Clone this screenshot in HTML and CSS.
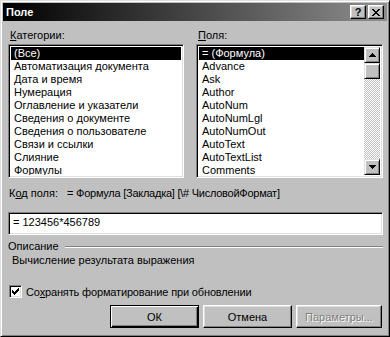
FILE: index.html
```html
<!DOCTYPE html>
<html>
  <head>
    <title>Поле</title>
    <link rel="stylesheet" href="styles.css">
  </head>
  <body>
    <div class="window">
      <div class="titlebar">
        <span class="title">Поле</span>
        <div class="title-buttons">
          <span class="tbtn help">?</span>
          <span class="tbtn close">
            <svg width="8" height="7" viewBox="0 0 8 7"><path d="M0 0h2v1h1v1h2V1h1V0h2v1H7v1H6v1H5v1h1v1h1v1h1v1H6V6H5V5H3v1H2v1H0V6h1V5h1V4h1V3H2V2H1V1H0z" fill="#000"/></svg>
          </span>
        </div>
      </div>

      <div class="content">
        <div class="lists">
          <div class="col">
            <div class="label"><u>К</u>атегории:</div>
            <div class="listbox">
              <div class="items">
                <div class="item selected">(Все)</div>
                <div class="item">Автоматизация документа</div>
                <div class="item">Дата и время</div>
                <div class="item">Нумерация</div>
                <div class="item">Оглавление и указатели</div>
                <div class="item">Сведения о документе</div>
                <div class="item">Сведения о пользователе</div>
                <div class="item">Связи и ссылки</div>
                <div class="item">Слияние</div>
                <div class="item">Формулы</div>
              </div>
            </div>
          </div>
          <div class="col">
            <div class="label"><u>П</u>оля:</div>
            <div class="listbox">
              <div class="items">
                <div class="item selected">= (Формула)</div>
                <div class="item">Advance</div>
                <div class="item">Ask</div>
                <div class="item">Author</div>
                <div class="item">AutoNum</div>
                <div class="item">AutoNumLgl</div>
                <div class="item">AutoNumOut</div>
                <div class="item">AutoText</div>
                <div class="item">AutoTextList</div>
                <div class="item">Comments</div>
              </div>
              <div class="scrollbar">
                <div class="sbtn">
                  <svg width="7" height="4" viewBox="0 0 7 4"><path d="M3 0h1v1h1v1h1v1h1v1H0V3h1V2h1V1h1z" fill="#000"/></svg>
                </div>
                <div class="sbtn thumb"></div>
                <div class="track"></div>
                <div class="sbtn">
                  <svg width="7" height="4" viewBox="0 0 7 4"><path d="M0 0h7v1H6v1H5v1H4v1H3V3H2V2H1V1H0z" fill="#000"/></svg>
                </div>
              </div>
            </div>
          </div>
        </div>

        <div class="code-row">
          <span>К<u>о</u>д поля:</span>
          <span class="code">= Формула [Закладка] [\# ЧисловойФормат]</span>
        </div>

        <div class="field-input">= 123456*456789</div>

        <div class="group-head">
          <span>Описание</span>
          <span class="groove"></span>
        </div>
        <div class="desc">Вычисление результата выражения</div>

        <div class="check-row">
          <span class="checkbox">
            <svg width="7" height="7" viewBox="0 0 7 7"><path d="M6 0h1v3H6v1H5v1H4v1H3v1H2V6H1V5H0V2h1v1h1v1h1V3h1V2h1V1h1z" fill="#000"/></svg>
          </span>
          <span class="check-label">Со<u>х</u>ранять форматирование при обновлении</span>
        </div>

        <div class="buttons">
          <div class="btn default"><span>ОК</span></div>
          <div class="btn">Отмена</div>
          <div class="btn disabled narrow">Параметры...</div>
        </div>
      </div>
    </div>
  </body>
</html>
```

FILE: styles.css
```css
* {
  box-sizing: border-box;
}
body {
  margin: 0;
  padding: 0;
  font-family: "Liberation Sans", Arial, sans-serif;
  font-size: 11px;
  color: #000;
  background: #c0c0c0;
}
u {
  text-decoration: underline;
  text-underline-offset: 1px;
}

/* window frame */
.window {
  width: 390px;
  height: 337px;
  background: #c0c0c0;
  border: 1px solid;
  border-color: #dfdfdf #000 #000 #dfdfdf;
  box-shadow: inset 1px 1px #fff, inset -1px -1px #808080;
  padding: 2px;
}
.titlebar {
  height: 18px;
  display: flex;
  align-items: center;
  justify-content: space-between;
  padding: 0 3px 0 3px;
  background: linear-gradient(to right, #000 0%, #2a2a2a 30%, #8e8e8e 100%);
}
.title {
  color: #fff;
  font-weight: bold;
  font-size: 11px;
}
.title-buttons {
  display: flex;
  gap: 2px;
}
.tbtn {
  width: 16px;
  height: 14px;
  display: flex;
  align-items: center;
  justify-content: center;
  background: #c0c0c0;
  border: 1px solid;
  border-color: #fff #000 #000 #fff;
  box-shadow: inset -1px -1px #808080, inset 1px 1px #dfdfdf;
  font-weight: bold;
  font-size: 11px;
  line-height: 12px;
}

/* dialog body */
.content {
  padding: 8px 4px 0 5px;
}
.lists {
  display: grid;
  grid-template-columns: 176px 187px;
  column-gap: 12px;
}
.label {
  height: 13px;
  line-height: 13px;
  padding-left: 2px;
  margin-bottom: 2px;
}
.listbox {
  height: 134px;
  display: flex;
  background: #fff;
  border: 1px solid;
  border-color: #808080 #fff #fff #808080;
  box-shadow: inset 1px 1px #000, inset -1px -1px #dfdfdf;
  padding: 2px;
}
.items {
  flex: 1;
  overflow: hidden;
}
.item {
  height: 13px;
  line-height: 13px;
  padding-left: 3px;
  white-space: nowrap;
}
.item.selected {
  background: #000;
  color: #fff;
}
.scrollbar {
  width: 16px;
  display: flex;
  flex-direction: column;
}
.sbtn {
  width: 16px;
  height: 16px;
  flex: none;
  display: flex;
  align-items: center;
  justify-content: center;
  background: #c0c0c0;
  border: 1px solid;
  border-color: #dfdfdf #000 #000 #dfdfdf;
  box-shadow: inset 1px 1px #fff, inset -1px -1px #808080;
}
.track {
  flex: 1;
  background-image: conic-gradient(#fff 25%, #c0c0c0 0 50%, #fff 0 75%, #c0c0c0 0);
  background-size: 2px 2px;
}

.code-row {
  margin-top: 9px;
  height: 13px;
  line-height: 13px;
  padding-left: 1px;
  display: flex;
}
.code {
  margin-left: 9px;
  letter-spacing: -0.25px;
}

.field-input {
  margin-top: 12px;
  height: 23px;
  line-height: 19px;
  padding: 0 4px;
  background: #fff;
  border: 1px solid;
  border-color: #808080 #fff #fff #808080;
  box-shadow: inset 1px 1px #000, inset -1px -1px #dfdfdf;
}

.group-head {
  margin-top: 5px;
  height: 13px;
  line-height: 13px;
  display: flex;
  align-items: center;
}
.groove {
  flex: 1;
  margin-left: 6px;
  height: 2px;
  border-top: 1px solid #808080;
  border-bottom: 1px solid #fff;
}
.desc {
  margin-top: 1px;
  height: 13px;
  line-height: 13px;
  padding-left: 4px;
}

.check-row {
  margin-top: 18px;
  height: 13px;
  display: flex;
  align-items: center;
  gap: 4px;
  padding-left: 1px;
}
.check-label {
  letter-spacing: -0.15px;
}
.checkbox {
  width: 13px;
  height: 13px;
  display: flex;
  align-items: center;
  justify-content: center;
  background: #fff;
  border: 1px solid;
  border-color: #808080 #fff #fff #808080;
  box-shadow: inset 1px 1px #000, inset -1px -1px #dfdfdf;
}

.buttons {
  margin-top: 7px;
  display: flex;
  justify-content: flex-end;
  gap: 4px;
  padding-right: 1px;
}
.btn {
  width: 89px;
  height: 23px;
  display: flex;
  align-items: center;
  justify-content: center;
  background: #c0c0c0;
  border: 1px solid;
  border-color: #fff #000 #000 #fff;
  box-shadow: inset -1px -1px #808080, inset 1px 1px #dfdfdf;
}
.btn.default {
  border: 1px solid #000;
  box-shadow: inset 1px 1px #fff, inset -1px -1px #000, inset -2px -2px #808080;
}
.btn.narrow {
  width: 86px;
}
.btn.disabled {
  color: #808080;
  text-shadow: 1px 1px #fff;
}
```
